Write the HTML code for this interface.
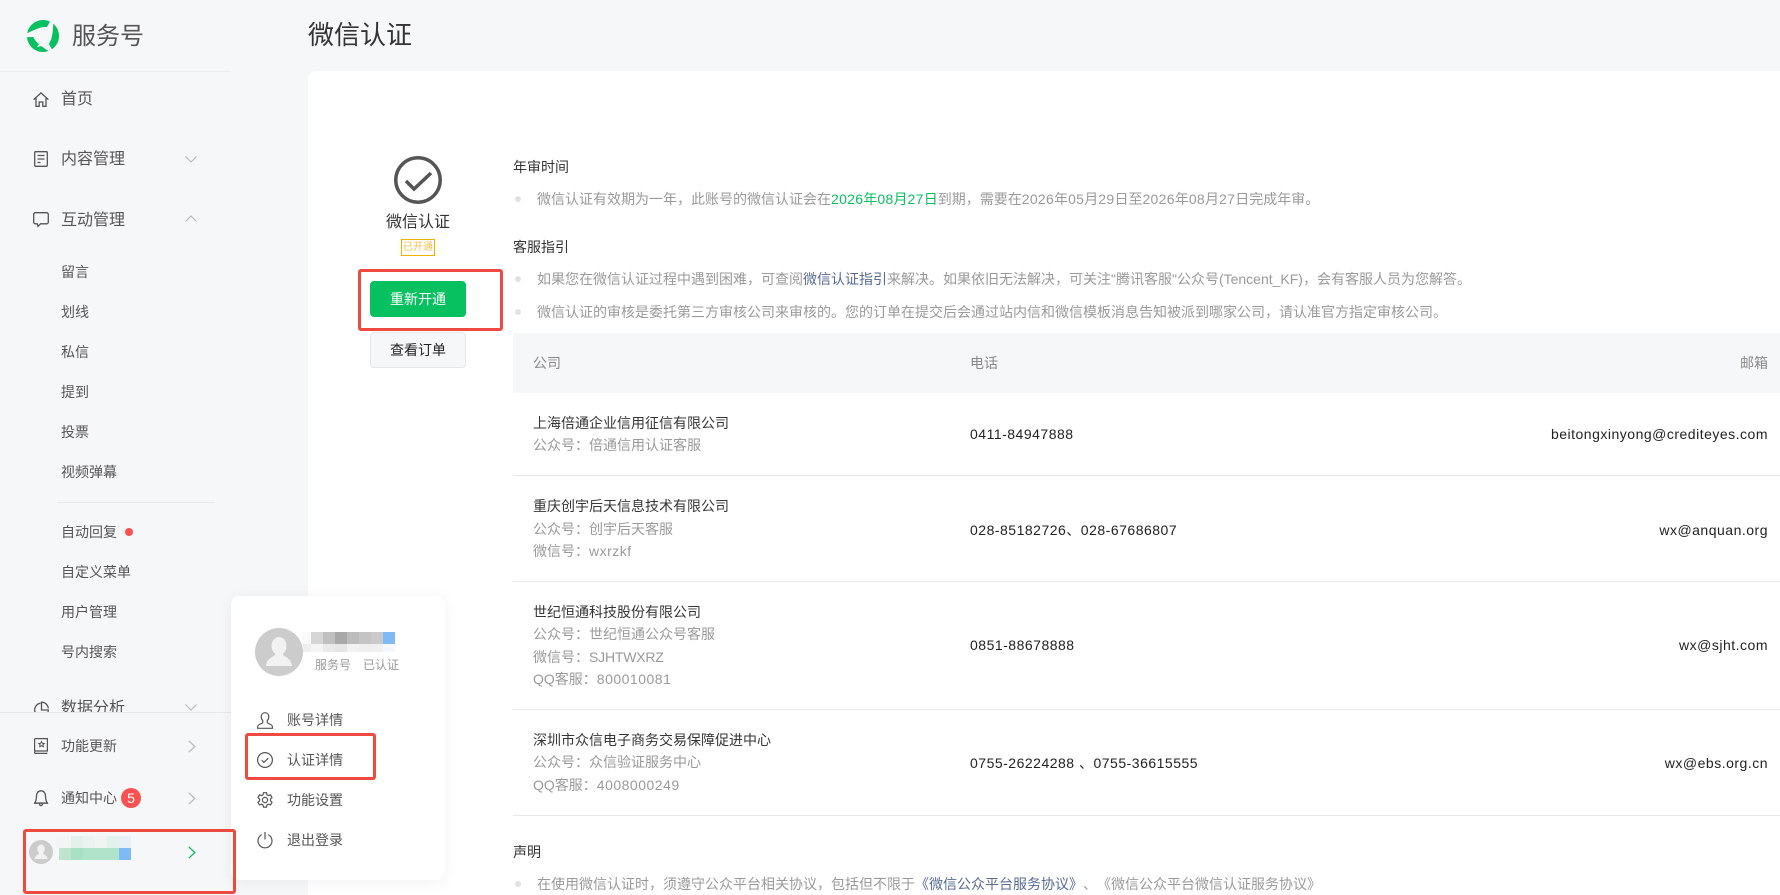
<!DOCTYPE html>
<html lang="zh-CN">
<head>
<meta charset="utf-8">
<title>微信认证</title>
<style>
html,body{margin:0;padding:0;width:1780px;height:895px;overflow:hidden;background:#f6f7f9;font-family:"Liberation Sans","Noto Sans CJK SC",sans-serif;}
*{box-sizing:border-box;}
.t{position:absolute;white-space:nowrap;line-height:20px;height:20px;font-size:14px;color:#353535;}
.n{font-size:16px;color:#555;left:61px;}
.i{font-size:14px;color:#555;left:61px;}
.g{color:#9a9a9a;}
.h{left:513px;color:#333;}
.p{left:537px;color:#9a9a9a;}
.d{position:absolute;left:515px;width:6px;height:6px;border-radius:3px;background:#e2e2e2;}
.gr{color:#07c160;}
.lk{color:#576b95;}
.hr{position:absolute;left:513px;right:0;height:1px;background:#e7e7e7;}
.r{right:12px;}
.num{letter-spacing:.5px;color:#222;}
.q{letter-spacing:.5px;}
.dg{letter-spacing:.3px;}
.box{position:absolute;border:3px solid #ef4a3f;border-radius:3px;}
.b{position:absolute;height:12px;}
svg{position:absolute;overflow:visible;fill:none;}
.m{left:287px;color:#555;font-size:14px;}
</style>
</head>
<body>
<!-- logo -->
<svg style="left:27px;top:20px" width="32" height="32" viewBox="-16 -16 32 32">
  <g fill="#07c160">
    <path d="M-15.760 -2.800A16 16 0 0 1 7 -14.400L4 -9C-3 -9.500 -9 -6 -15.760 -2.800Z"/>
    <path transform="rotate(120)" d="M-15.760 -2.800A16 16 0 0 1 7 -14.400L4 -9C-3 -9.500 -9 -6 -15.760 -2.800Z"/>
    <path transform="rotate(240)" d="M-15.760 -2.800A16 16 0 0 1 7 -14.400L4 -9C-3 -9.500 -9 -6 -15.760 -2.800Z"/>
  </g>
  <path d="M-6 11L-3.500 7.500 3.500 9Z" fill="#f6f7f9"/>
</svg>
<div class="t" style="left:72px;top:21px;height:32px;line-height:32px;font-size:24px;color:#555;">服务号</div>
<div style="position:absolute;left:0;top:71px;width:231px;height:1px;background:#eceef0;"></div>
<div class="t" style="left:308px;top:17px;height:36px;line-height:36px;font-size:26px;color:#333;">微信认证</div>
<div style="position:absolute;left:308px;top:71px;right:0;bottom:0;background:#fff;border-radius:8px 0 0 0;"></div>

<!-- sidebar nav -->
<svg style="left:33px;top:92px" width="16" height="15" viewBox="0 0 16 15" stroke="#555" stroke-width="1.3"><path d="M.6 7.6 8 .9l7.4 6.7M3 6v8.300h3.200V10h3.600v4.300H13V6"/></svg>
<div class="t n" style="top:90px;">首页</div>

<svg style="left:34px;top:151px" width="14" height="16" viewBox="0 0 14 16" stroke="#555" stroke-width="1.3"><rect x=".7" y=".7" width="12.6" height="14.6" rx="1"/><path d="M3.500 4.500h7M3.500 8h7M3.500 11.500h3"/></svg>
<div class="t n" style="top:150px;">内容管理</div>
<svg style="left:185px;top:156px" width="12" height="7" viewBox="0 0 12 7" stroke="#bbb" stroke-width="1.2"><path d="M.5.5 6 6l5.500-5.500"/></svg>

<svg style="left:33px;top:212px" width="16" height="15" viewBox="0 0 16 15" stroke="#555" stroke-width="1.3"><path d="M2.200.7h11.600c.8 0 1.500.7 1.500 1.500v8.100c0 .8-.7 1.500-1.500 1.500H7.600L5 14.400l-.7-2.600H2.200c-.8 0-1.500-.7-1.500-1.500V2.200c0-.8.7-1.500 1.500-1.500Z"/></svg>
<div class="t n" style="top:211px;">互动管理</div>
<svg style="left:185px;top:215px" width="12" height="7" viewBox="0 0 12 7" stroke="#bbb" stroke-width="1.2"><path d="M.5 6.500 6 1l5.500 5.500"/></svg>

<div class="t i" style="top:262px;">留言</div>
<div class="t i" style="top:302px;">划线</div>
<div class="t i" style="top:342px;">私信</div>
<div class="t i" style="top:382px;">提到</div>
<div class="t i" style="top:422px;">投票</div>
<div class="t i" style="top:462px;">视频弹幕</div>
<div style="position:absolute;left:57px;top:502px;width:158px;height:1px;background:#e8e9eb;"></div>
<div class="t i" style="top:522px;">自动回复</div>
<div style="position:absolute;left:125px;top:528px;width:8px;height:8px;border-radius:50%;background:#fa5151;"></div>
<div class="t i" style="top:562px;">自定义菜单</div>
<div class="t i" style="top:602px;">用户管理</div>
<div class="t i" style="top:642px;">号内搜索</div>

<svg style="left:34px;top:701px" width="16" height="16" viewBox="0 0 16 16" stroke="#555" stroke-width="1.3"><path d="M6.500 2.200A6.800 6.800 0 1 0 14.300 9H7.500V1.200A6.800 6.800 0 0 1 14.300 7.500"/></svg>
<div class="t n" style="top:699px;">数据分析</div>
<svg style="left:185px;top:704px" width="12" height="7" viewBox="0 0 12 7" stroke="#bbb" stroke-width="1.2"><path d="M.5.5 6 6l5.500-5.500"/></svg>

<!-- bottom panel -->
<div style="position:absolute;left:0;top:712px;width:231px;height:183px;background:#f6f7f9;border-top:1px solid #e6e7e9;"></div>
<svg style="left:34px;top:738px" width="14" height="16" viewBox="0 0 14 16" stroke="#555" stroke-width="1.200"><path d="M.6 13V1.600c0-.6.4-1 1-1h11.800v12.400H1.800C1 13 .6 13.600.6 14.200s.4 1.200 1.200 1.200h11.600"/><path d="m7.500 3.500.9 1.800 1.900.2-1.400 1.300.4 1.900-1.800-1-1.800 1 .4-1.900-1.400-1.300 1.900-.2Z" stroke-width="1"/></svg>
<div class="t i" style="top:736px;">功能更新</div>
<svg style="left:188px;top:740px" width="8" height="13" viewBox="0 0 8 13" stroke="#bbb" stroke-width="1.300"><path d="m.8.8 6 5.700-6 5.700"/></svg>

<svg style="left:34px;top:790px" width="14" height="16" viewBox="0 0 14 16" stroke="#555" stroke-width="1.300"><path d="M7 .8C4 .8 2.500 3.400 2.500 6c0 3.500-.6 5.200-1.800 7h12.600c-1.200-1.800-1.800-3.500-1.800-7 0-2.600-1.500-5.200-4.500-5.200ZM0 13.200h14M5.500 14c.2 1.100.8 1.600 1.500 1.600s1.300-.5 1.500-1.600"/></svg>
<div class="t i" style="top:788px;">通知中心</div>
<div style="position:absolute;left:121px;top:788px;width:20px;height:20px;border-radius:50%;background:#fa5151;color:#fff;font-size:14px;line-height:20px;text-align:center;">5</div>
<svg style="left:188px;top:792px" width="8" height="13" viewBox="0 0 8 13" stroke="#bbb" stroke-width="1.300"><path d="m.8.8 6 5.700-6 5.700"/></svg>

<svg style="left:29px;top:840px" width="24" height="24" viewBox="0 0 48 48"><circle cx="24" cy="24" r="24" fill="#ccc"/><ellipse cx="24" cy="18" rx="7.500" ry="9" fill="#f2f2f2"/><path d="M11 38c0-6 6-9 9-11v-3h8v3c3 2 9 5 9 11Z" fill="#f2f2f2"/></svg>
<div class="b" style="left:56px;top:836px;width:15px;background:#f3f5f5"></div>
<div class="b" style="left:71px;top:836px;width:12px;background:#e4f1eb"></div>
<div class="b" style="left:83px;top:836px;width:12px;background:#eaf3ef"></div>
<div class="b" style="left:95px;top:836px;width:12px;background:#f0f4f3"></div>
<div class="b" style="left:107px;top:836px;width:12px;background:#e4f2ec"></div>
<div class="b" style="left:119px;top:836px;width:12px;background:#e7eff7"></div>
<div class="b" style="left:59px;top:848px;width:12px;background:#bfe3cf"></div>
<div class="b" style="left:71px;top:848px;width:12px;background:#a9e1c5"></div>
<div class="b" style="left:83px;top:848px;width:36px;background:#b0e3c9"></div>
<div class="b" style="left:119px;top:848px;width:12px;background:#7ebaf5"></div>
<svg style="left:188px;top:846px" width="8" height="13" viewBox="0 0 8 13" stroke="#07c160" stroke-width="1.300"><path d="m.8.8 6 5.700-6 5.700"/></svg>

<!-- cert column -->
<svg style="left:394px;top:156px" width="48" height="48" viewBox="0 0 48 48" stroke="#555" stroke-width="3.500"><circle cx="24" cy="24" r="22.200"/><path d="m12 25 8 8 17-16"/></svg>
<div class="t" style="left:386px;top:213px;font-size:16px;width:64px;text-align:center;color:#333;">微信认证</div>
<div style="position:absolute;left:401px;top:239px;width:34px;height:17px;border:1px solid #efb100;color:#f2c14e;font-size:10px;line-height:15px;text-align:center;">已开通</div>
<div style="position:absolute;left:370px;top:281px;width:96px;height:36px;border-radius:4px;background:#07c160;color:#fff;font-size:14px;line-height:36px;text-align:center;">重新开通</div>
<div style="position:absolute;left:370px;top:332px;width:96px;height:36px;border-radius:4px;background:#f6f7f9;border:1px solid #e6e7e9;color:#222;font-size:14px;line-height:34px;text-align:center;">查看订单</div>

<!-- right content -->
<div class="t h" style="top:157px;">年审时间</div>
<div class="d" style="top:196px;"></div>
<div class="t p" style="top:189px;">微信认证有效期为一年，此账号的微信认证会在<span class="gr"><span class="dg">2026</span>年<span class="dg">08</span>月<span class="dg">27</span>日</span>到期，需要在<span class="dg">2026</span>年<span class="dg">05</span>月<span class="dg">29</span>日至<span class="dg">2026</span>年<span class="dg">08</span>月<span class="dg">27</span>日完成年审。</div>
<div class="t h" style="top:237px;">客服指引</div>
<div class="d" style="top:276px;"></div>
<div class="t p" style="top:269px;">如果您在微信认证过程中遇到困难，可查阅<span class="lk">微信认证指引</span>来解决。如果依旧无法解决，可关注"腾讯客服"公众号(Tencent_KF)，会有客服人员为您解答。</div>
<div class="d" style="top:309px;"></div>
<div class="t p" style="top:302px;">微信认证的审核是委托第三方审核公司来审核的。您的订单在提交后会通过站内信和微信模板消息告知被派到哪家公司，请认准官方指定审核公司。</div>

<div style="position:absolute;left:513px;top:333px;right:0;height:60px;background:#f6f7f8;"></div>
<div class="t g" style="left:533px;top:353px;color:#888;">公司</div>
<div class="t g" style="left:970px;top:353px;color:#888;">电话</div>
<div class="t g r" style="top:353px;color:#888;">邮箱</div>

<div class="t" style="left:533px;top:413px;">上海倍通企业信用征信有限公司</div>
<div class="t g" style="left:533px;top:435px;">公众号：倍通信用认证客服</div>
<div class="t num" style="left:970px;top:424px;">0411-84947888</div>
<div class="t r num" style="top:424px;">beitongxinyong@crediteyes.com</div>
<div class="hr" style="top:475px;"></div>

<div class="t" style="left:533px;top:496px;">重庆创宇后天信息技术有限公司</div>
<div class="t g" style="left:533px;top:519px;">公众号：创宇后天客服</div>
<div class="t g" style="left:533px;top:541px;">微信号：<span class="q">wxrzkf</span></div>
<div class="t num" style="left:970px;top:520px;">028-85182726、028-67686807</div>
<div class="t r num" style="top:520px;">wx@anquan.org</div>
<div class="hr" style="top:581px;"></div>

<div class="t" style="left:533px;top:602px;">世纪恒通科技股份有限公司</div>
<div class="t g" style="left:533px;top:624px;">公众号：世纪恒通公众号客服</div>
<div class="t g" style="left:533px;top:647px;">微信号：<span style="letter-spacing:-.2px">SJHTWXRZ</span></div>
<div class="t g" style="left:533px;top:669px;">QQ客服：<span class="q">800010081</span></div>
<div class="t num" style="left:970px;top:635px;">0851-88678888</div>
<div class="t r num" style="top:635px;">wx@sjht.com</div>
<div class="hr" style="top:709px;"></div>

<div class="t" style="left:533px;top:730px;">深圳市众信电子商务交易保障促进中心</div>
<div class="t g" style="left:533px;top:752px;">公众号：众信验证服务中心</div>
<div class="t g" style="left:533px;top:775px;">QQ客服：<span class="q">4008000249</span></div>
<div class="t num" style="left:970px;top:753px;">0755-26224288 、0755-36615555</div>
<div class="t r num" style="top:753px;">wx@ebs.org.cn</div>
<div class="hr" style="top:815px;"></div>

<div class="t h" style="top:842px;">声明</div>
<div class="d" style="top:881px;"></div>
<div class="t p" style="top:874px;">在使用微信认证时，须遵守公众平台相关协议，包括但不限于<span class="lk">《微信公众平台服务协议》</span><span style="margin:0 7px">、</span>《微信公众平台微信认证服务协议》</div>

<!-- popup -->
<div style="position:absolute;left:231px;top:596px;width:214px;height:284px;background:#fff;border-radius:8px;box-shadow:0 2px 16px rgba(0,0,0,.06);"></div>
<svg style="left:255px;top:628px" width="48" height="48" viewBox="0 0 48 48"><circle cx="24" cy="24" r="24" fill="#ccc"/><ellipse cx="24" cy="18" rx="7.500" ry="9" fill="#f2f2f2"/><path d="M11 38c0-6 6-9 9-11v-3h8v3c3 2 9 5 9 11Z" fill="#f2f2f2"/></svg>
<div class="b" style="left:302px;top:632px;width:9px;background:#f9f9f9"></div>
<div class="b" style="left:311px;top:632px;width:12px;background:#d6d6d6"></div>
<div class="b" style="left:323px;top:632px;width:12px;background:#c0c0c0"></div>
<div class="b" style="left:335px;top:632px;width:12px;background:#a8a8a8"></div>
<div class="b" style="left:347px;top:632px;width:12px;background:#bcbcbc"></div>
<div class="b" style="left:359px;top:632px;width:12px;background:#c4c4c4"></div>
<div class="b" style="left:371px;top:632px;width:12px;background:#cacaca"></div>
<div class="b" style="left:383px;top:632px;width:12px;background:#7fbaf4"></div>
<div class="b" style="left:303px;top:644px;width:8px;height:8px;background:#efefef"></div>
<div class="b" style="left:311px;top:644px;width:12px;height:8px;background:#f5f5f5"></div>
<div class="b" style="left:323px;top:644px;width:12px;height:8px;background:#eaeaea"></div>
<div class="b" style="left:335px;top:644px;width:12px;height:8px;background:#e6e6e6"></div>
<div class="b" style="left:347px;top:644px;width:12px;height:8px;background:#f2f2f2"></div>
<div class="b" style="left:359px;top:644px;width:12px;height:8px;background:#efefef"></div>
<div class="b" style="left:371px;top:644px;width:12px;height:8px;background:#f0f0f0"></div>
<div class="b" style="left:383px;top:644px;width:12px;height:8px;background:#f4f8fe"></div>
<div class="t" style="left:315px;top:655px;font-size:12px;color:#9a9a9a;">服务号</div>
<div class="t" style="left:363px;top:655px;font-size:12px;color:#9a9a9a;">已认证</div>

<svg style="left:257px;top:712px" width="16" height="17" viewBox="0 0 16 17" stroke="#555" stroke-width="1.200"><path d="M8 .7c2.400 0 3.800 1.800 3.800 4 0 1.700-.6 3-1.600 4v1.500c0 .8 1 1.200 2.400 1.800 1.700.7 2.800 1.400 2.800 2.700v1.600H.6v-1.600c0-1.300 1.100-2 2.800-2.700 1.400-.6 2.400-1 2.400-1.800V8.700c-1-1-1.600-2.300-1.600-4 0-2.200 1.400-4 3.800-4Z"/></svg>
<div class="t m" style="top:710px;">账号详情</div>

<svg style="left:257px;top:752px" width="16" height="16" viewBox="0 0 16 16" stroke="#555" stroke-width="1.200"><circle cx="8" cy="8" r="7.400"/><path d="m4.700 8.200 2.200 2.200 4.400-4.200"/></svg>
<div class="t m" style="top:750px;">认证详情</div>

<svg style="left:257px;top:792px" width="16" height="16" viewBox="0 0 16 16" stroke="#555" stroke-width="1.200"><circle cx="8" cy="8" r="2.600"/><path d="M6.500.7h3l.5 2.100 1.500.8 2-.7 1.500 2.600-1.500 1.500v1.800l1.500 1.500-1.500 2.600-2-.7-1.500.8-.5 2.100h-3l-.5-2.100-1.500-.8-2 .7L1 10.300l1.500-1.500V7L1 5.500l1.500-2.600 2 .7L6 2.800Z"/></svg>
<div class="t m" style="top:790px;">功能设置</div>

<svg style="left:257px;top:832px" width="16" height="16" viewBox="0 0 16 16" stroke="#555" stroke-width="1.200"><path d="M4.800 2.600a7 7 0 1 0 6.400 0M8 0v7.500"/></svg>
<div class="t m" style="top:830px;">退出登录</div>

<!-- annotations -->
<div class="box" style="left:358px;top:269px;width:145px;height:62px;"></div>
<div class="box" style="left:245px;top:733px;width:131px;height:47px;"></div>
<div class="box" style="left:23px;top:829px;width:213px;height:65px;"></div>
</body>
</html>
